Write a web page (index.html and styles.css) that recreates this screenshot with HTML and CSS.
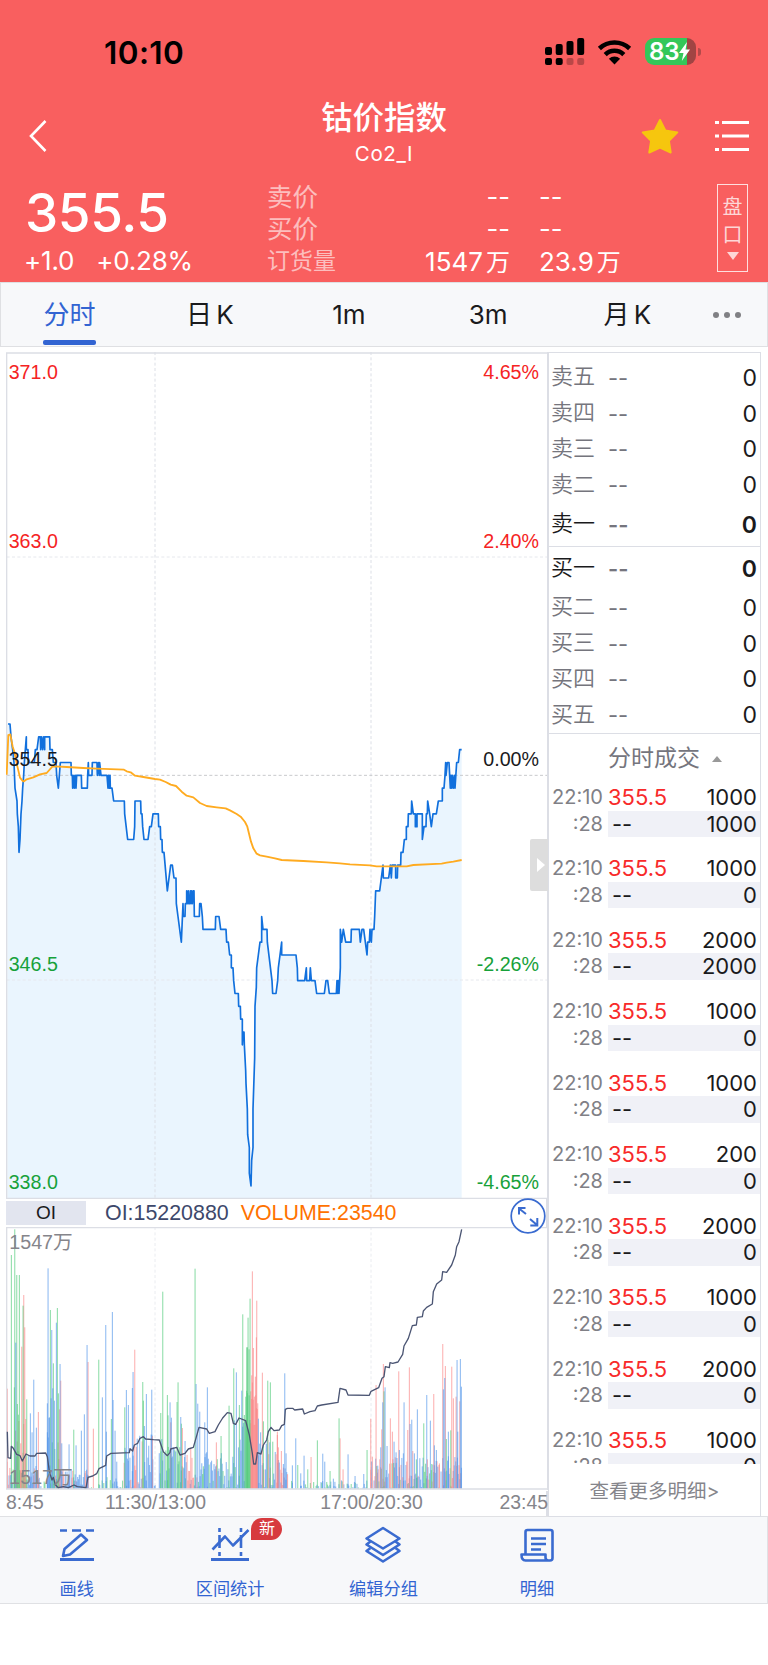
FILE: index.html
```html
<!DOCTYPE html>
<html lang="zh-CN">
<head>
	<meta charset="utf-8">
	<title>钴价指数</title>
	<link rel="stylesheet" href="styles.css">
</head>
<body>
	<header class="top">
		<div class="status">
			<span class="clock">10:10</span>
			<div class="status-icons">
				<svg width="40" height="28" viewBox="0 0 40 28">
					<rect x="0" y="9" width="7" height="8" rx="2"/>
					<rect x="10.7" y="6" width="7" height="11" rx="2"/>
					<rect x="21.5" y="3" width="7" height="14" rx="2"/>
					<rect x="32.2" y="0" width="7" height="17" rx="2"/>
					<rect x="0" y="20" width="7" height="7" rx="2"/>
					<rect x="10.7" y="20" width="7" height="7" rx="2"/>
					<rect x="21.5" y="20" width="7" height="7" rx="2" opacity=".25"/>
					<rect x="32.2" y="20" width="7" height="7" rx="2" opacity=".25"/>
				</svg>
				<svg class="wifi" width="35" height="26" viewBox="0 0 35 26">
					<path d="M2.400 9.500a22 22 0 0 1 30.200 0M8.200 15.600a13.400 13.400 0 0 1 18.600 0" fill="none" stroke="#000" stroke-width="4.500"/>
					<path d="M17.5 25.500l-5.600-5.800a8.200 8.200 0 0 1 11.200 0z"/>
				</svg>
				<div class="battery"><span>83</span>
					<svg width="11" height="19" viewBox="0 0 11 19"><path d="M8 0L0 11h4.500L2.800 19 11 7.500H6.500z" fill="#fff"/></svg>
				</div>
			</div>
		</div>

		<div class="titlebar">
			<svg class="back" width="20" height="34" viewBox="0 0 20 34"><path d="M17.500 2L3 17l14.500 15" fill="none" stroke="#fff" stroke-width="2.600"/></svg>
			<div class="title">
				<h1>钴价指数</h1>
				<p>Co2_I</p>
			</div>
			<div class="title-tools">
				<svg width="38" height="36" viewBox="0 0 38 36"><path d="M19 2l5.300 10.500 12 1.900-8.400 8.500 1.800 11.600L19 29.700 8.300 34.500l1.800-11.600L1.700 14.400l12-1.900z" fill="#f6c60e" stroke="#f6c60e" stroke-width="2" stroke-linejoin="round"/></svg>
				<svg width="34" height="32" viewBox="0 0 34 32"><path d="M0 2.500h4M7 2.500H34M0 16h4M7 16H34M0 29.500h4M7 29.500H34" stroke="#fff" stroke-width="2.800"/></svg>
			</div>
		</div>

		<div class="quote">
			<div class="last">355.5</div>
			<div class="change"><span>+1.0</span><span>+0.28%</span></div>
			<span class="k k1">卖价</span><span class="v1">--</span><span class="v2">--</span>
			<span class="k k2">买价</span><span class="v1">--</span><span class="v2">--</span>
			<span class="k k3">订货量</span><span class="v1">1547<i>万</i></span><span class="v2">23.9<i>万</i></span>
			<div class="pankou"><span>盘</span><span>口</span><b></b></div>
		</div>
	</header>

	<nav class="tabs">
		<a class="active">分时</a>
		<a>日 K</a>
		<a>1m</a>
		<a>3m</a>
		<a>月 K</a>
		<a class="more"><i></i><i></i><i></i></a>
	</nav>

	<main class="main">
		<section class="charts">
			<!-- one unit is a third of a pixel -->
			<svg class="price-chart" width="542" height="847" viewBox="18 1056 1626 2541">
				<g id="price"></g>
				<path class="grid" d="M465 1056V3594M1113 1056V3594"/>
				<path class="grid thin" d="M20 1671H1641M20 2940H1641"/>
				<path class="grid mid" d="M20 2326H1641"/>
				<path class="frame" d="M1641 1059H20V3595H1641"/>
				<path class="frame" d="M1643 1056V3597" stroke-width="6"/>
				<g id="lines"></g>
				<g class="lbl">
					<text class="up" x="26" y="1136">371.0</text>
					<text class="up" x="26" y="1645">363.0</text>
					<text x="26" y="2297">354.5</text>
					<text class="down" x="26" y="2913">346.5</text>
					<text class="down" x="26" y="3567">338.0</text>
				</g>
				<g class="lbl end">
					<text class="up" x="1617" y="1136">4.65%</text>
					<text class="up" x="1617" y="1645">2.40%</text>
					<text x="1617" y="2297">0.00%</text>
					<text class="down" x="1617" y="2913">-2.26%</text>
					<text class="down" x="1617" y="3567">-4.65%</text>
				</g>
			</svg>
			<button class="fold"></button>

			<div class="indicator">
				<span class="ind-name">OI</span>
				<span class="ind-oi">OI:15220880</span>
				<span class="ind-vol">VOLUME:23540</span>
				<svg class="expand" width="36" height="36" viewBox="0 0 36 36" fill="none" stroke="#3a6bd0">
					<circle cx="18" cy="18" r="16.800" fill="#fff" stroke-width="1.700"/>
					<path d="M16 16L9 10.500M9 16.500v-6.500h6.500M20 21l7 6M27.300 20v7.500h-7" stroke-width="2"/>
				</svg>
			</div>
			<svg class="oi-chart" width="542" height="264" viewBox="18 3681 1626 792">
				<path class="grid" d="M465 3681V4466M1113 3681V4466" opacity=".6"/>
				<g id="volume"></g>
				<path class="frame" d="M1641 3683H20V4467H1641"/>
				<path class="frame" d="M1643 3681V4470" stroke-width="6"/>
				<g id="oi"></g>
				<g class="lbl gray">
					<text x="28" y="3746">1547万</text>
					<text x="28" y="4453">1517万</text>
				</g>
			</svg>
			<div class="axis">
				<span>8:45</span><span>11:30/13:00</span><span>17:00/20:30</span><span>23:45</span>
			</div>
		</section>

		<aside class="book">
			<div class="depth sells">
				<div><span>卖五</span><em>--</em><b>0</b></div>
				<div><span>卖四</span><em>--</em><b>0</b></div>
				<div><span>卖三</span><em>--</em><b>0</b></div>
				<div><span>卖二</span><em>--</em><b>0</b></div>
				<div class="first"><span>卖一</span><em>--</em><b>0</b></div>
			</div>
			<div class="depth buys">
				<div class="first"><span>买一</span><em>--</em><b>0</b></div>
				<div><span>买二</span><em>--</em><b>0</b></div>
				<div><span>买三</span><em>--</em><b>0</b></div>
				<div><span>买四</span><em>--</em><b>0</b></div>
				<div><span>买五</span><em>--</em><b>0</b></div>
			</div>
			<h2>分时成交<i></i></h2>
			<div class="ticks" id="ticks"></div>
			<a class="see-more">查看更多明细&gt;</a>
		</aside>
	</main>

	<footer class="toolbar">
		<a>
			<svg width="40" height="38" viewBox="0 0 40 38">
				<path d="M3 4.500h7M15 4.500h9M29 4.500h8" stroke-width="2.600"/>
				<path d="M3 33.500h34" stroke-width="2.800"/>
				<path d="M6 30l1.500-7L24 8.500l6 5.500L13 28.500z"/>
			</svg>
			画线
		</a>
		<a>
			<svg width="40" height="38" viewBox="0 0 40 38">
				<path d="M1 33.500h38" stroke-width="2.800"/>
				<path d="M9.500 2v4M9.500 9v13M9.500 26v4M31 2v4M31 9v13M31 26v4" stroke-width="2.600"/>
				<path d="M2.500 23.500L15 10.500l8 9L38.500 4"/>
			</svg>
			区间统计
			<span class="badge">新</span>
		</a>
		<a>
			<svg width="40" height="38" viewBox="0 0 40 38">
				<path d="M20 2l16.500 10.500L20 22.500 3.500 12.500z"/>
				<path d="M7.500 15.500L3.500 18.500 20 29l16.500-10.500-4-3"/>
				<path d="M7.500 22L3.500 25 20 35.500 36.500 25l-4-3"/>
			</svg>
			编辑分组
		</a>
		<a>
			<svg width="40" height="38" viewBox="0 0 40 38">
				<path d="M8.500 28V6q0-2 2-2h23q2 0 2 2v26q0 2.500-2.500 2.500H8.500q-4 0-4-6h24v3q0 3 3 3"/>
				<path d="M14 12.500h15M14 18h15M14 23.500h10"/>
			</svg>
			明细
		</a>
	</footer>
	<script src="chart.js"></script>
</body>
</html>
```

FILE: styles.css
```css
* {
	box-sizing: border-box;
}

body {
	margin: 0;
	width: 768px;
	background: #fff;
	font-family: Inter, "Noto Sans CJK SC", sans-serif;
	color: #1a1a1c;
}

h1, h2, p {
	margin: 0;
	font-weight: 400;
}

i, em {
	font-style: normal;
}

/* header */
.top {
	height: 282px;
	background: #f95f5f;
	color: #fff;
}

.status {
	height: 92px;
	padding: 12px 72px 0 104px;
	display: flex;
	align-items: center;
	justify-content: space-between;
	color: #000;
}

.clock {
	font-size: 31.5px;
	font-weight: 600;
	letter-spacing: .4px;
}

.status-icons {
	display: flex;
	align-items: center;
	margin-top: -1px;
}

.wifi {
	margin: 0 13px 0 12px;
}

.battery {
	display: flex;
	align-items: center;
	position: relative;
	width: 51px;
	height: 27px;
	padding-left: 4px;
	border-radius: 9px;
	background: linear-gradient(90deg, #34c759 42px, #a14443 42px);
	color: #fff;
	font-size: 24px;
	font-weight: 600;
	letter-spacing: -.2px;
}

.battery::after {
	content: "";
	position: absolute;
	right: -5px;
	top: 10px;
	width: 3px;
	height: 8px;
	border-radius: 0 3px 3px 0;
	background: #b24a4a;
}

.titlebar {
	height: 88px;
	display: grid;
	grid-template-columns: 1fr auto 1fr;
	align-items: center;
}

.back {
	margin-left: 28px;
}

.title {
	text-align: center;
	padding-bottom: 10px;
}

.title h1 {
	font-size: 31.5px;
	line-height: 44px;
	font-weight: 500;
}

.title p {
	font-size: 20.5px;
	line-height: 27px;
	letter-spacing: .6px;
}

.title-tools {
	display: flex;
	justify-content: flex-end;
	align-items: center;
	gap: 36px;
	margin-right: 19px;
	padding-bottom: 1px;
}

.quote {
	height: 102px;
	position: relative;
	padding: 0 20px 0 26px;
	display: grid;
	grid-template-columns: 241px 90px 153px 1fr 31px;
	grid-template-rows: 32px 32px 32px;
	align-items: center;
	font-size: 25.5px;
}

.last {
	grid-row: 1 / 3;
	font-size: 53px;
	font-weight: 500;
	line-height: 64px;
	letter-spacing: -.4px;
	margin: 1px 0 0 -1px;
}

.change {
	grid-row: 3;
	grid-column: 1;
	display: flex;
	gap: 22px;
	margin: 1px 0 0 -2px;
	font-size: 26px;
	letter-spacing: -.2px;
}

.k {
	grid-column: 2;
	color: rgba(255, 255, 255, .6);
	line-height: 30px;
	margin-top: 1px;
}

.k1, .k1 + .v1, .k1 + .v1 + .v2 { grid-row: 1; }
.k2, .k2 + .v1, .k2 + .v1 + .v2 { grid-row: 2; }
.k3, .k3 + .v1, .k3 + .v1 + .v2 { grid-row: 3; }

.k3 {
	font-size: 23px;
}

.v1 {
	grid-column: 3;
	text-align: right;
	margin-top: 1px;
}

.v2 {
	grid-column: 4;
	padding-left: 29px;
	margin-top: 1px;
}

.k3 + .v1, .k3 + .v1 + .v2 {
	margin-top: 0;
	font-size: 26px;
}

.v1 i, .v2 i {
	font-size: 24px;
	margin-left: 3px;
}

.pankou {
	grid-column: 5;
	grid-row: 1 / 4;
	height: 88px;
	border: 1px solid rgba(255, 255, 255, .8);
	display: flex;
	flex-direction: column;
	align-items: center;
	padding-top: 8px;
	font-size: 20px;
	line-height: 28px;
	color: rgba(255, 255, 255, .75);
}

.pankou b {
	margin-top: 3px;
	border: 6px solid transparent;
	border-top: 8px solid rgba(255, 255, 255, .75);
	border-bottom: 0;
}

/* period tabs */
.tabs {
	height: 65px;
	display: flex;
	border: 1px solid #dfe0e3;
	background: #f7f8fa;
	font-size: 26px;
}

.tabs a {
	width: 139.2px;
	line-height: 63px;
	text-align: center;
	word-spacing: -3px;
}

.tabs .active {
	position: relative;
	padding-right: 2px;
	color: #3264d2;
}

.tabs .active::after {
	content: "";
	position: absolute;
	left: 42px;
	bottom: 1px;
	width: 53px;
	height: 5px;
	border-radius: 2px;
	background: #3264d2;
}

.tabs .more {
	flex: 1;
	display: flex;
	align-items: center;
	gap: 5px;
	padding-left: 16px;
}

.more i {
	width: 6px;
	height: 6px;
	border-radius: 50%;
	background: #808084;
}

/* charts */
.main {
	display: flex;
	height: 1169px;
	padding: 5px 6px 0;
}

.charts {
	position: relative;
	width: 542px;
}

.charts > svg {
	display: block;
}

.grid {
	fill: none;
	stroke: #dcdfe6;
	stroke-width: 3;
	stroke-dasharray: 9 7;
}

.thin {
	stroke: #e6e8ed;
}

.mid {
	stroke: #c8c9cc;
}

.frame {
	fill: none;
	stroke: #dcdee5;
	stroke-width: 4;
}

.area { fill: #eaf5fe; }
.line, .avg, .oi-line { fill: none; stroke-linejoin: round; }
.line { stroke: #1170dd; stroke-width: 5; }
.avg { stroke: #ffab20; stroke-width: 5.5; }
.oi-line { stroke: #4b5573; stroke-width: 4; }

.b { fill: #5095e9; fill-opacity: .6; }
.g { fill: #4fc978; fill-opacity: .6; }
.r { fill: #fa8585; fill-opacity: .6; }

.lbl {
	font: 59px "Liberation Sans", "Noto Sans CJK SC", sans-serif;
	fill: #1a1a1c;
}

.end { text-anchor: end; }
.up { fill: #f52323; }
.down { fill: #17a13a; }
.gray { fill: #85858b; }

.fold {
	position: absolute;
	right: 0;
	top: 487px;
	width: 18px;
	height: 52px;
	padding: 0;
	border: 0;
	border-radius: 2px 0 0 2px;
	background: #ddd;
}

.fold::after {
	content: "";
	display: block;
	margin-left: 7px;
	width: 0;
	border: 7px solid transparent;
	border-left: 8px solid #fff;
	border-right: 0;
}

.indicator {
	display: flex;
	align-items: center;
	height: 28px;
	font: 21.4px "Liberation Sans", sans-serif;
	border-right: 2px solid #dcdee5;
}

.ind-name {
	width: 80px;
	height: 24px;
	line-height: 24px;
	text-align: center;
	font-size: 19px;
	background: #e2e5ef;
}

.ind-oi {
	margin-left: 19px;
	color: #3d486b;
}

.ind-vol {
	margin-left: 12px;
	color: #ff7200;
}

.expand {
	position: absolute;
	right: 2px;
	top: 846px;
}

.axis {
	display: grid;
	grid-template-columns: 40px 219px 213px 70px;
	height: 25px;
	font: 19.4px/23px "Liberation Sans", sans-serif;
	color: #85858b;
	border-right: 2px solid #dcdee5;
}

.axis span:nth-child(2),
.axis span:nth-child(3) {
	text-align: center;
}

.axis span:nth-child(4) {
	text-align: right;
}

/* order book */
.book {
	width: 213px;
	height: 1165px;
	border: 1px solid #dcdee5;
	font-size: 22px;
}

.depth {
	border-bottom: 1px solid #dcdee5;
}

.depth div {
	display: flex;
	align-items: center;
	height: 35.75px;
	padding: 0 3px 0 2px;
}

.depth span {
	width: 57px;
	font-size: 22px;
	line-height: 30px;
	padding-bottom: 3px;
	font-weight: 350;
	color: #75757d;
}

.depth em {
	color: #75757d;
}

.depth b {
	margin-left: auto;
	font-weight: 400;
	font-size: 23px;
}

.depth .first span {
	color: #1a1a1c;
}

.depth .first em,
.depth .first b {
	font-weight: 600;
}

.sells {
	height: 194px;
	padding-top: 7px;
}

.sells .first {
	height: 43px;
}

.buys {
	height: 187px;
}

.buys .first {
	height: 43px;
}

.book h2 {
	display: flex;
	align-items: center;
	height: 50px;
	gap: 12px;
	padding: 0 0 3px 59px;
	font-size: 23px;
	line-height: 40px;
	color: #75757d;
}

h2 i {
	margin-top: 2px;
	border: 5px solid transparent;
	border-bottom: 6px solid #999;
	border-top: 0;
}

.ticks {
	height: 680px;
	overflow: hidden;
}

.tick {
	display: grid;
	grid-template-columns: 56px 1fr;
	grid-template-rows: 26.500px 26.500px;
	line-height: 26px;
	height: 71.45px;
}

.tick time {
	padding-right: 2px;
	font-size: 20px;
	text-align: right;
	color: #808086;
}

.tick div {
	display: flex;
	justify-content: space-between;
	margin-left: 3px;
	padding: 0 3px 0 0;
}

.tick em {
	color: #f82a2a;
}

.tick .open {
	padding-left: 4px;
	background: #f0f1f7;
}

.see-more {
	display: block;
	line-height: 54px;
	text-align: center;
	font-size: 19.5px;
	color: #85858b;
}

/* bottom toolbar */
.toolbar {
	height: 88px;
	display: grid;
	grid-template-columns: repeat(5, 1fr);
	margin-left: -1px;
	border: 1px solid #e0e1e4;
	background: #f7f8fa;
}

.toolbar a {
	position: relative;
	display: flex;
	flex-direction: column;
	align-items: center;
	padding-top: 9px;
	font-size: 17.2px;
	line-height: 24px;
	color: #3264d2;
	gap: 13px;
}

.toolbar svg {
	fill: none;
	stroke: #3a6bd0;
	stroke-width: 2.6;
	stroke-linejoin: round;
}

.badge {
	position: absolute;
	left: 98px;
	top: 1px;
	width: 31px;
	height: 22px;
	border-radius: 11px 11px 11px 0;
	background: #d73a3e;
	color: #fff;
	font-size: 16px;
	line-height: 21px;
	text-align: center;
}
```

FILE: chart.js
```js
// price as [x, ticks below the previous close], one tick is 38.5 units
const price = [
	24,-4, 30,-4, 33,-3, 38,-2, 42,-1, 45,1, 51,2, 52,3, 55,4, 57,6, 60,5, 63,3, 66,2, 68,1, 71,0, 73,-1, 76,-2, 79,-3,
	79,-2, 84,-2, 85,-1, 103,-1, 106,-2, 111,-2, 116,-3, 121,-3, 122,-2, 125,-3, 128,-2, 131,-3, 134,-2, 134,-3, 149,-3,
	150,-2, 157,-2, 160,-1, 168,-1, 170,0, 175,1, 178,0, 181,-1, 213,-1, 214,0, 217,0, 218,1, 222,0, 223,1, 227,0, 228,1,
	230,0, 244,0, 245,1, 262,1, 263,0, 265,-1, 266,0, 276,0, 277,-1, 291,-1, 292,0, 296,-1, 298,0, 299,-1, 303,0, 321,0,
	324,1, 326,0, 328,1, 330,0, 331,1, 336,1, 341,2, 373,2, 374,3, 383,5, 401,5, 404,4, 405,2, 422,2, 423,3, 426,3, 428,4,
	432,5, 444,5, 449,4, 454,4, 459,3, 475,3, 476,4, 481,4, 482,5, 486,5, 487,6, 492,6, 502,9, 507,8, 512,7, 517,7, 522,8,
	528,8, 529,10, 534,11, 544,13, 549,10, 550,11, 555,11, 556,10, 560,10, 560,9, 562,10, 565,9, 566,10, 569,10, 571,9,
	573,10, 575,9, 577,10, 580,9, 582,9, 583,11, 598,11, 599,10, 603,10, 607,11, 609,12, 646,12, 647,11, 657,11, 662,12,
	678,12, 680,13, 685,13, 689,14, 694,14, 694,15, 699,15, 701,16, 705,17, 715,17, 716,18, 721,18, 722,19, 727,19, 727,21,
	729,20, 732,20, 733,21, 737,23, 738,24, 742,26, 743,28, 748,29, 748,31, 753,32, 755,30, 759,29, 759,26, 764,22, 765,18,
	769,16.5, 770,15, 775,14, 780,13, 785,13, 785,11, 789,12, 801,12, 802,13, 816,16, 818,17, 828,17, 833,16, 835,15,
	840,14, 845,13, 845,14, 888,14, 892,15, 893,16, 914,16, 919,15, 920,16, 929,16, 931,15, 934,16, 945,16, 950,17, 973,17,
	978,16, 983,16, 988,17, 1009,17, 1011,16, 1013,17, 1015,16, 1017,17, 1021,15, 1021,12, 1025,13, 1030,12, 1037,13,
	1053,13, 1054,12, 1078,12, 1081,13, 1086,12, 1091,12, 1096,13, 1101,14, 1103,13, 1108,13, 1110,12, 1114,13, 1116,12,
	1122,12, 1124,11, 1127,9, 1139,9, 1144,8, 1149,7, 1150,8, 1166,8, 1171,7, 1174,8, 1176,7, 1187,7, 1187,8, 1192,8,
	1193,7, 1202,7, 1203,6, 1209,6, 1213,5, 1219,5, 1219,4, 1224,4, 1225,3, 1234,3, 1235,2, 1240,3, 1246,3, 1246,4, 1251,4,
	1251,3, 1267,3, 1267,5, 1272,4, 1278,4, 1279,3, 1282,3, 1283,2, 1289,3, 1294,4, 1299,3, 1309,3, 1315,2, 1327,2, 1327,1,
	1332,1, 1335,0, 1337,-1, 1338,0, 1342,-1, 1347,-1, 1351,1, 1353,0, 1355,1, 1357,0, 1360,1, 1363,0, 1365,1, 1370,-1,
	1375,-1, 1379,-2, 1385,-2
];

const avg = [
	20,224, 25,105, 31,103, 38,140, 43,155, 50,190, 60,233, 68,243, 72,244, 80,238, 100,232, 120,223, 140,219, 157,200,
	165,199, 200,201, 250,204, 290,206, 372,209, 380,214, 392,217, 405,227, 430,231, 465,237, 480,239, 497,246, 512,254,
	528,258, 545,275, 560,287, 580,292, 600,309, 620,318, 650,322, 677,325, 690,331, 710,342, 722,350, 735,366, 742,380,
	748,405, 753,425, 760,445, 770,461, 780,466, 800,470, 825,475, 845,480, 910,483, 980,487, 1020,490, 1050,493,
	1110,496, 1130,499, 1220,499, 1240,495, 1325,491, 1340,488, 1360,485, 1385,480
];

const oi = [
	22,725, 24,803, 32,805, 34,769, 40,775, 50,793, 60,797, 67,813, 78,792, 90,798, 105,798, 110,790, 137,789, 142,800,
	148,845, 156,870, 160,862, 166,884, 175,893, 190,890, 205,893, 222,885, 232,890, 258,893, 264,862, 278,858, 290,851,
	297,836, 317,826, 320,798, 333,790, 388,788, 390,776, 398,783, 403,765, 413,760, 420,745, 430,740, 437,747, 460,749,
	478,750, 485,770, 490,785, 502,797, 510,788, 512,777, 530,772, 540,795, 555,790, 565,777, 580,772, 585,755, 592,730,
	597,712, 620,717, 628,730, 645,725, 655,705, 668,684, 682,668, 693,670, 700,700, 707,703, 717,684, 737,692, 748,735,
	757,790, 761,822, 767,822, 772,788, 783,792, 790,765, 800,750, 805,725, 813,712, 822,722, 838,720, 845,707, 853,703,
	856,658, 862,655, 878,655, 884,660, 908,657, 913,672, 930,665, 945,662, 952,648, 965,645, 1014,637, 1020,595,
	1038,600, 1044,615, 1108,616, 1113,604, 1136,593, 1146,565, 1152,560, 1156,530, 1168,533, 1170,518, 1178,520,
	1194,516, 1208,493, 1212,468, 1225,445, 1237,407, 1249,405, 1252,382, 1267,380, 1270,363, 1280,352, 1297,342,
	1300,305, 1310,282, 1325,270, 1328,245, 1340,247, 1355,225, 1366,195, 1370,170, 1377,155, 1385,118
];

// tall volume bars: x, top
const bars = {
	r: [22,596, 71,315, 74,412, 65,470, 62,760, 77,687, 115,666, 178,658, 182,572, 264,516, 280,716, 404,479, 457,738,
		512,697, 547,714, 572,773, 649,757, 757,244, 760,474, 763,620, 766,560, 770,332, 769,442, 773,640, 787,548, 832,725,
		752,700, 755,556, 832,735, 835,772, 844,783, 933,801, 1020,745, 1029,838, 1112,686, 1117,800, 1128,585, 1145,718,
		1150,522, 1171,685, 1177,725, 1196,544, 1223,720, 1228,532, 1238,783, 1282,808, 1301,612, 1317,825, 1328,462,
		1336,528, 1355,530, 1360,625, 1368,620, 1379,634],
	g: [34,195, 44,118, 50,255, 58,255, 69,347, 80,628, 52,642, 55,674, 43,592, 151,360, 172,354, 160,520, 175,610,
		221,719, 296,509, 334,687, 374,652, 428,576, 430,632, 488,305, 482,669, 502,615, 504,676, 531,636, 534,577,
		544,701, 585,236, 663,738, 687,647, 701,535, 718,645, 728,373, 733,675, 737,620, 740,472, 742,472, 744,383,
		747,478, 750,326, 790,694, 803,572, 811,577, 818,755, 893,825, 923,838, 952,751, 990,843, 1017,685, 1101,780,
		1152,604, 1249,808, 1271,700, 1295,822, 1339,747, 1352,721],
	b: [47,458, 91,670, 101,569, 109,713, 96,727, 144,235, 155,420, 169,398, 158,595, 153,625, 142,640, 148,682, 163,632,
		180,522, 185,760, 207,763, 228,766, 244,722, 253,673, 261,465, 307,622, 317,405, 319,725, 337,366, 339,630,
		345,722, 350,815, 379,600, 385,645, 397,594, 399,546, 433,708, 439,612, 455,599, 510,637, 514,683, 542,681,
		555,753, 588,582, 593,641, 599,665, 614,697, 622,592, 709,547, 725,602, 775,686, 809,757, 854,550, 850,822,
		858,790, 877,826, 887,745, 902,850, 912,797, 968,791, 974,815, 1000,866, 1044,793, 1065,858, 1091,852, 1133,827,
		1142,772, 1148,637, 1155,592, 1161,768, 1182,755, 1188,787, 1198,780, 1212,637, 1210,790, 1230,702, 1235,689,
		1252,658, 1243,790, 1280,615, 1291,692, 1303,766, 1309,780, 1330,598, 1334,564, 1345,725, 1371,510, 1373,725,
		1381,507, 1384,590]
};

// small bars in between: up to x, highest bar, colours
const filler = [
	[45, 90, 'rgb'], [82, 230, 'ggr'], [118, 110, 'bbr'], [140, 25, 'bg'], [166, 250, 'bbg'], [180, 220, 'ggr'],
	[270, 60, 'bbbr'], [370, 35, 'bg'], [460, 170, 'bbbbr'], [476, 25, 'b'], [560, 150, 'bbgg'], [600, 110, 'brg'],
	[700, 110, 'bbbg'], [735, 210, 'bgb'], [752, 320, 'g'], [774, 330, 'r'], [840, 170, 'bbr'], [865, 70, 'bbr'],
	[1110, 26, 'bbg'], [1320, 95, 'bbrg'], [1386, 110, 'bbr']
];

const path = (pts, f) => {
	let s = '';
	for (let i = 0; i < pts.length; i += 2) s += (i ? 'L' : 'M') + pts[i] + ' ' + f(pts[i + 1]);
	return s;
};

const line = path(price, t => 2326 + t * 38.5);
document.getElementById('price').innerHTML = `<path class="area" d="${line}V3595H22V2172z"/>`;
document.getElementById('lines').innerHTML =
	`<path class="line" d="${line}"/><path class="avg" d="${path(avg, y => 2100 + y)}"/>`;
document.getElementById('oi').innerHTML = `<path class="oi-line" d="${path(oi, y => 3570 + y)}"/>`;

const bar = (x, h, c) => `<rect class="${c}" x="${x - 1.5}" y="${4466 - h}" width="3.4" height="${h}"/>`;
let out = '';
let seed = 7;
const rnd = () => (seed = seed * 16807 % 2147483647) / 2147483647;
let x = 22;
for (const [end, max, cols] of filler) {
	for (; x < end; x += 2.45) {
		const sparse = max < 40 && rnd() < .5;
		const c = cols[Math.floor(rnd() * cols.length)];
		const h = max * (max > 300 ? .5 + rnd() * .5 : Math.pow(rnd(), 1.3));
		if (!sparse) out += bar(x, h, c);
	}
}
for (const c in bars) {
	for (let i = 0; i < bars[c].length; i += 2) out += bar(bars[c][i], 896 - bars[c][i + 1], c);
}
document.getElementById('volume').innerHTML = out;

const trades = [[1000, 1000], [1000, 0], [2000, 2000], [1000, 0], [1000, 0], [200, 0], [2000, 0], [1000, 0], [2000, 0], [1000, 0]];
document.getElementById('ticks').innerHTML = trades.map(([vol, open]) => `
	<div class="tick">
		<time>22:10</time><div><em>355.5</em><span>${vol}</span></div>
		<time>:28</time><div class="open"><span>--</span><span>${open}</span></div>
	</div>`).join('');
```
